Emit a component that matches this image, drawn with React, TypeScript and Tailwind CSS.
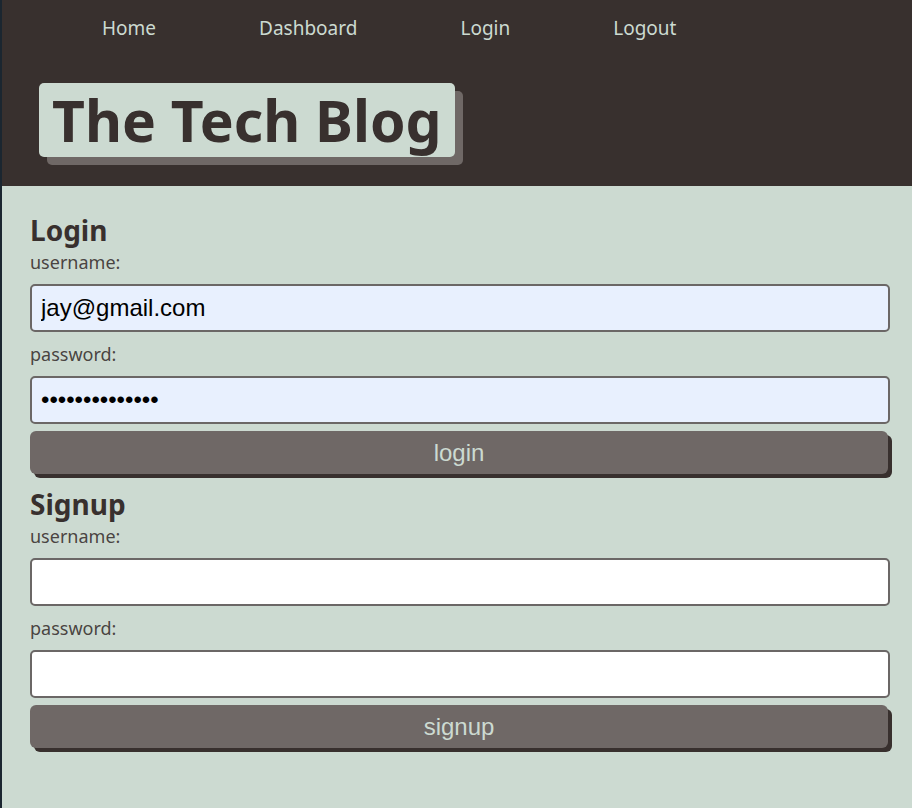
import React from 'react';

const navLinks = ['Home', 'Dashboard', 'Login', 'Logout'];

const Field: React.FC<{ label: string; type: string; value?: string; filled?: boolean }> = ({ label, type, value, filled }) => (
  <div className="flex flex-col">
    <label className="text-[18px] leading-[24px] text-[#38302E]/90 mt-[10px] mb-[10px]">{label}</label>
    <input
      type={type}
      defaultValue={value}
      className={`h-[48px] w-full rounded-[5px] border-2 border-[#6b6766] px-[9px] text-[24px] text-black outline-none ${filled ? 'bg-[#e8f0fe]' : 'bg-white'}`}
      style={{ fontFamily: '"Liberation Sans", Arial, sans-serif' }}
    />
  </div>
);

const SubmitButton: React.FC<{ text: string }> = ({ text }) => (
  <button
    className="mt-[7px] h-[43px] w-[858px] rounded-[6px] bg-[#6F6866] text-[24px] text-[#CCDAD1] shadow-[4px_4px_0_#38302E]"
    style={{ fontFamily: '"Liberation Sans", Arial, sans-serif' }}
  >
    {text}
  </button>
);

const App: React.FC = () => {
  return (
    <div
      className="min-h-[808px] bg-[#CCDAD1] border-l-2 border-[#1b2630]"
      style={{ fontFamily: '"Noto Sans", sans-serif' }}
    >
      <header className="h-[186px] bg-[#38302E] pt-[14px]">
        <nav className="flex gap-[103px] pl-[100px]">
          {navLinks.map((link) => (
            <a key={link} href="#" className="text-[19px] leading-[28px] text-[#CCDAD1]">
              {link}
            </a>
          ))}
        </nav>
        <div className="mt-[41px] ml-[37px] inline-block">
          <h1 className="rounded-[5px] bg-[#CCDAD1] px-[13px] text-[57px] font-bold leading-[74px] text-[#38302E] shadow-[8px_8px_0_#6F6866]">
            The Tech Blog
          </h1>
        </div>
      </header>

      <main className="pl-[28px] pr-[22px] pt-[26px]">
        <h2 className="text-[28px] font-bold leading-[36px] text-[#38302E]">Login</h2>
        <div className="-mt-[8px]">
          <Field label="username:" type="text" value="jay@gmail.com" filled />
          <Field label="password:" type="password" value="abcdefghijklmn" filled />
        </div>
        <SubmitButton text="login" />

        <h2 className="mt-[12px] text-[28px] font-bold leading-[36px] text-[#38302E]">Signup</h2>
        <div className="-mt-[8px]">
          <Field label="username:" type="text" />
          <Field label="password:" type="password" />
        </div>
        <SubmitButton text="signup" />
      </main>
    </div>
  );
};

export default App;
